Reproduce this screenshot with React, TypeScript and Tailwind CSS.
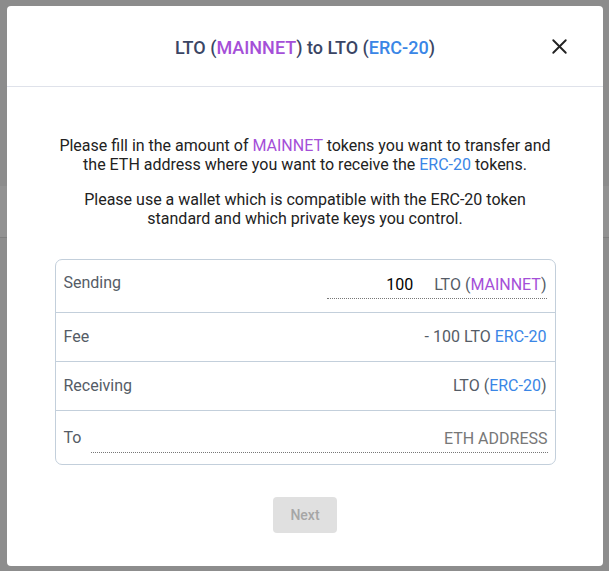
import { X } from "lucide-react";

const Mainnet = () => <span className="text-[#a54fd8]">MAINNET</span>;
const Erc = () => <span className="text-[#3a86e6]">ERC-20</span>;

const App = () => {
  return (
    <div className="relative w-[609px] h-[571px] overflow-hidden bg-[#8e8e8e] font-['Roboto','Liberation_Sans',sans-serif]">
      {/* page behind the overlay */}
      <div className="flex flex-col h-full">
        <div className="h-[186px] bg-[#8c8c8c]" />
        <div className="h-[52px] bg-[#929292] border-b border-[#7f7f7f]" />
        <div className="flex-1 bg-[#8d8d8d]" />
      </div>

      {/* modal */}
      <div className="absolute left-[7px] top-[6px] w-[596px] h-[560px] bg-white rounded-[4px] flex flex-col">
        <header className="relative h-[81px] flex items-center justify-center border-b border-[#dfe2ea]">
          <h2 className="text-[18px] font-medium text-[#3a4564] mt-[2px]">
            LTO (<Mainnet />) to LTO (<Erc />)
          </h2>
          <button className="absolute right-[31px] top-[28px] text-[#222]">
            <X size={25} strokeWidth={1.8} />
          </button>
        </header>

        <div className="w-[501px] mx-auto pt-[49px] flex flex-col items-center">
          <p className="text-[16px] leading-[19px] text-[#222] text-center">
            Please fill in the amount of <Mainnet /> tokens you want to transfer and the ETH address where you want
            to receive the <Erc /> tokens.
          </p>
          <p className="text-[16px] leading-[19px] text-[#222] text-center mt-[16px] px-[20px]">
            Please use a wallet which is compatible with the ERC-20 token standard and which private keys you control.
          </p>

          <div className="w-[501px] mt-[31px] border border-[#c3cfdb] rounded-[7px] text-[16px] text-[#555c66]">
            <div className="h-[53px] flex items-center justify-between pl-[8px] pr-[8px] border-b border-[#c3cfdb]">
              <span className="-mt-[6px]">Sending</span>
              <div className="flex items-baseline w-[220px] border-b border-dotted border-[#777] pb-[1px]">
                <input
                  defaultValue="100"
                  className="flex-1 min-w-0 text-right text-[16px] text-black outline-none bg-transparent"
                />
                <span className="ml-[21px] shrink-0 whitespace-nowrap">
                  LTO (<Mainnet />)
                </span>
              </div>
            </div>
            <div className="h-[49px] flex items-center justify-between px-[8px] border-b border-[#c3cfdb]">
              <span>Fee</span>
              <span>
                - 100 LTO <Erc />
              </span>
            </div>
            <div className="h-[49px] flex items-center justify-between px-[8px] border-b border-[#c3cfdb]">
              <span>Receiving</span>
              <span>
                LTO (<Erc />)
              </span>
            </div>
            <div className="h-[53px] flex items-center pl-[8px] pr-[7px] gap-[10px]">
              <span>To</span>
              <input
                placeholder="ETH ADDRESS"
                className="flex-1 mt-[4px] text-right text-[16px] text-black placeholder:text-[#777] outline-none bg-transparent border-b border-dotted border-[#777] pb-[1px]"
              />
            </div>
          </div>

          <button
            disabled
            className="mt-[32px] w-[64px] h-[36px] rounded-[4px] bg-[#e0e0e0] text-[#a6a6a6] text-[14px] font-medium"
          >
            Next
          </button>
        </div>
      </div>
    </div>
  );
};

export default App;
